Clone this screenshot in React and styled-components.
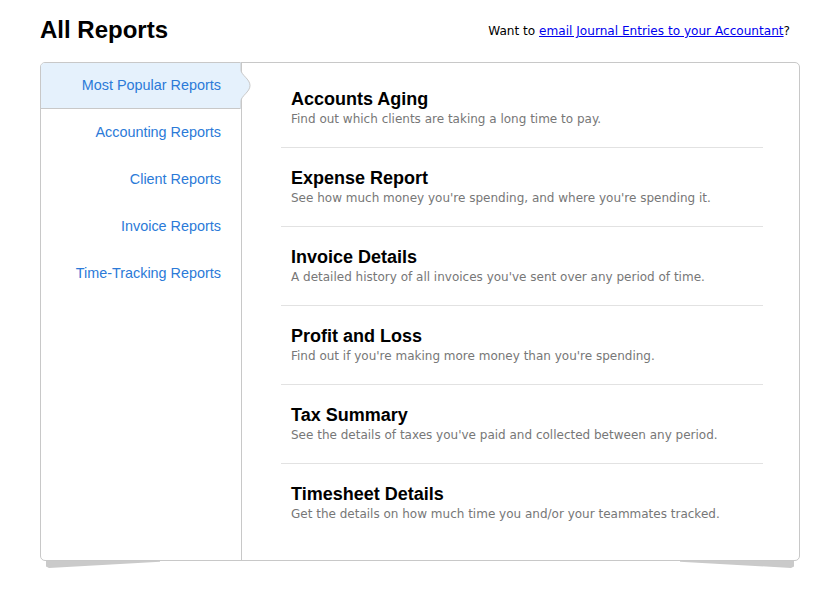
import React from "react";
import styled, { createGlobalStyle } from "styled-components";

const Global = createGlobalStyle`
  html, body { margin: 0; padding: 0; background: #fff; }
  body { font-family: "Liberation Sans", Arial, sans-serif; }
`;

const Page = styled.div`
  width: 840px;
  padding: 0 40px 0 40px;
  box-sizing: border-box;
`;

const Header = styled.div`
  display: flex;
  justify-content: space-between;
  align-items: flex-start;
  height: 62px;
  padding-top: 15px;
  box-sizing: border-box;
`;

const Title = styled.h1`
  margin: 0;
  font: bold 24px/30px "Liberation Sans", Arial, sans-serif;
  color: #000;
`;

const Note = styled.div`
  margin: 8px 10px 0 0;
  font: 12.1px/16px "DejaVu Sans", Verdana, sans-serif;
  color: #000;
  a { color: #0000ee; text-decoration: underline; }
`;

const Panel = styled.div`
  display: flex;
  width: 760px;
  height: 499px;
  box-sizing: border-box;
  border: 1px solid #c8c8c8;
  border-radius: 5px;
  background: #fff;
`;

const ShadowRow = styled.div`
  display: flex;
  justify-content: space-between;
  width: 760px;
  padding: 0 6px;
  box-sizing: border-box;
`;

const Shadow = styled.div`
  width: 114px;
  height: 7px;
  background: #cacaca;
  clip-path: ${p =>
    p.$side === "left"
      ? "polygon(0 0, 100% 0, 100% 10%, 3px 100%, 0 80%)"
      : "polygon(0 0, 100% 0, 100% 80%, calc(100% - 3px) 100%, 0 10%)"};
`;

const Sidebar = styled.nav`
  width: 200px;
  flex: none;
  border-right: 1px solid #c8c8c8;
  display: flex;
  flex-direction: column;
`;

const NavItem = styled.a`
  position: relative;
  display: block;
  height: ${p => (p.$active ? "45px" : "47px")};
  padding-right: 20px;
  text-align: right;
  font: 14.4px "Liberation Sans", Arial, sans-serif;
  line-height: ${p => (p.$active ? "45px" : "47px")};
  color: #2b7ad8;
  text-decoration: none;
  background: ${p => (p.$active ? "#e5f1fc" : "transparent")};
  border-bottom: ${p => (p.$active ? "1px solid #c8c8c8" : "none")};
  border-top-left-radius: ${p => (p.$active ? "4px" : "0")};
`;

const Chevron = styled.svg`
  position: absolute;
  top: 0;
  right: -11px;
  width: 12px;
  height: 45px;
  overflow: visible;
`;

const Content = styled.div`
  flex: 1;
  padding: 6px 36px 0 39px;
`;

const Row = styled.div`
  padding: 19px 0 20px 10px;
  border-bottom: ${p => (p.$last ? "none" : "1px solid #e2e2e2")};
`;

const RowTitle = styled.h2`
  margin: 0;
  font: bold 18px/22px "Liberation Sans", Arial, sans-serif;
  color: #000;
`;

const RowDesc = styled.p`
  margin: 2px 0 0;
  font: 12px/15px "DejaVu Sans", Verdana, sans-serif;
  color: #777;
`;

const categories = [
  "Most Popular Reports",
  "Accounting Reports",
  "Client Reports",
  "Invoice Reports",
  "Time-Tracking Reports",
];

const reports = [
  ["Accounts Aging", "Find out which clients are taking a long time to pay."],
  ["Expense Report", "See how much money you're spending, and where you're spending it."],
  ["Invoice Details", "A detailed history of all invoices you've sent over any period of time."],
  ["Profit and Loss", "Find out if you're making more money than you're spending."],
  ["Tax Summary", "See the details of taxes you've paid and collected between any period."],
  ["Timesheet Details", "Get the details on how much time you and/or your teammates tracked."],
];

export default function App() {
  return (
    <>
      <Global />
      <Page>
        <Header>
          <Title>All Reports</Title>
          <Note>
            Want to <a href="#">email Journal Entries to your Accountant</a>?
          </Note>
        </Header>
        <Panel>
          <Sidebar>
            {categories.map((c, i) => (
              <NavItem key={c} href="#" $active={i === 0}>
                {c}
                {i === 0 && (
                  <Chevron viewBox="0 0 12 45">
                    <path
                      d="M0 -1 L1 -1 L1 7 C1 12 10 16 10 22.5 C10 29 1 33 1 38 L1 46 L0 46 Z"
                      fill="#e5f1fc"
                    />
                    <path
                      d="M1 -1 L1 7 C1 12 10 16 10 22.5 C10 29 1 33 1 38 L1 46"
                      fill="none"
                      stroke="#c8c8c8"
                      strokeWidth="1"
                    />
                  </Chevron>
                )}
              </NavItem>
            ))}
          </Sidebar>
          <Content>
            {reports.map(([t, d], i) => (
              <Row key={t} $last={i === reports.length - 1}>
                <RowTitle>{t}</RowTitle>
                <RowDesc>{d}</RowDesc>
              </Row>
            ))}
          </Content>
        </Panel>
        <ShadowRow>
          <Shadow $side="left" />
          <Shadow $side="right" />
        </ShadowRow>
      </Page>
    </>
  );
}
